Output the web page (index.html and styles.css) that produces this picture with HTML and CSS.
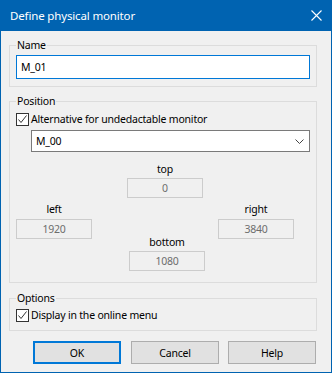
FILE: index.html
```html
<!DOCTYPE html>
<html lang="en">
<head>
    <meta charset="UTF-8">
    <title>Define physical monitor</title>
    <link rel="stylesheet" href="styles.css">
</head>
<body>

    <div class="window">
        <div class="titlebar">
            <span class="title">Define physical monitor</span>
            <svg class="close" width="11" height="11" viewBox="0 0 11 11">
                <path d="M0.5 0.5 L10.5 10.5 M10.5 0.5 L0.5 10.5" stroke="#fff" stroke-width="1.1" fill="none"/>
            </svg>
        </div>

        <div class="content">
            <fieldset class="group group-name">
                <legend>Name</legend>
                <div class="textbox">M_01</div>
            </fieldset>

            <fieldset class="group group-position">
                <legend>Position</legend>
                <label class="check-row">
                    <span class="checkbox">
                        <svg width="11" height="11" viewBox="0 0 11 11">
                            <path d="M1.5 5.5 L4 8.5 L9.5 1.5" stroke="#333" stroke-width="1" fill="none"/>
                        </svg>
                    </span>
                    Alternative for undedactable monitor
                </label>
                <div class="combo">
                    <span>M_00</span>
                    <svg width="9" height="5" viewBox="0 0 9 5">
                        <path d="M0.5 0.5 L4.5 4.5 L8.5 0.5" stroke="#444" stroke-width="1" fill="none"/>
                    </svg>
                </div>

                <div class="coords">
                    <div class="coord coord-top">
                        <div class="coord-label">top</div>
                        <div class="coord-field">0</div>
                    </div>
                    <div class="coord-row">
                        <div class="coord">
                            <div class="coord-label">left</div>
                            <div class="coord-field">1920</div>
                        </div>
                        <div class="coord coord-right">
                            <div class="coord-label">right</div>
                            <div class="coord-field">3840</div>
                        </div>
                    </div>
                    <div class="coord coord-bottom">
                        <div class="coord-label">bottom</div>
                        <div class="coord-field">1080</div>
                    </div>
                </div>
            </fieldset>

            <fieldset class="group group-options">
                <legend>Options</legend>
                <label class="check-row">
                    <span class="checkbox">
                        <svg width="11" height="11" viewBox="0 0 11 11">
                            <path d="M1.5 5.5 L4 8.5 L9.5 1.5" stroke="#333" stroke-width="1" fill="none"/>
                        </svg>
                    </span>
                    Display in the online menu
                </label>
            </fieldset>

            <div class="buttons">
                <button class="btn btn-default">OK</button>
                <button class="btn">Cancel</button>
                <button class="btn">Help</button>
            </div>
        </div>
    </div>

</body>
</html>
```

FILE: styles.css
```css
* {
    box-sizing: border-box;
}

body {
    margin: 0;
    font-family: 'Noto Sans', 'Open Sans', sans-serif;
    font-size: 10.5px;
    letter-spacing: -0.2px;
    color: #000;
}

.window {
    width: 332px;
    height: 373px;
    background: #f0f0f0;
    border: 1px solid #0063b1;
    border-top: none;
}

.titlebar {
    height: 31px;
    background: #0063b1;
    color: #fff;
    display: flex;
    align-items: center;
    justify-content: space-between;
    padding: 0 10px 0 9px;
    margin: 0 -1px;
    font-size: 11.5px;
    letter-spacing: -0.15px;
}

.title {
    padding-left: 1px;
}

.content {
    padding: 7px 14px 0 8px;
    line-height: 15px;
}

.group {
    margin: 0;
    padding: 0 6px 7px 6px;
    border: 1px solid #dcdcdc;
    min-width: 0;
}

.group legend {
    padding: 0 1px;
    line-height: 15px;
}

.textbox {
    margin-top: 2px;
    height: 24px;
    width: 294px;
    border: 1px solid #0078d7;
    background: #fff;
    padding: 0 4px;
    line-height: 22px;
}

.group-position {
    margin-top: 7px;
    padding-bottom: 11px;
}

.check-row {
    display: flex;
    align-items: center;
    margin-top: 3px;
    height: 15px;
}

.checkbox {
    width: 13px;
    height: 13px;
    border: 1px solid #333;
    background: #fff;
    display: flex;
    align-items: center;
    justify-content: center;
    margin-right: 2px;
}

.combo {
    margin: 3px 0 0 15px;
    height: 22px;
    width: 279px;
    border: 1px solid #7a7a7a;
    background: #fff;
    display: flex;
    align-items: center;
    justify-content: space-between;
    padding: 0 5px 0 4px;
}

.coords {
    padding-top: 10px;
}

.coord {
    width: 76px;
    text-align: center;
}

.coord-top {
    margin-left: 111px;
}

.coord-row {
    display: flex;
    justify-content: space-between;
    padding-right: 16px;
    margin-top: 4px;
}

.coord-bottom {
    margin-left: 113px;
    margin-top: -4px;
}

.coord-field {
    margin-top: 1px;
    height: 20px;
    border: 1px solid #cccccc;
    color: #6d6d6d;
    line-height: 18px;
}

.coord-row .coord-field {
    margin-top: 2px;
}

.group-options {
    margin-top: 8px;
    padding-bottom: 7px;
}

.group-options .check-row {
    margin-top: 2px;
}

.buttons {
    display: flex;
    justify-content: flex-end;
    gap: 9px;
    margin-top: 10px;
    padding-right: 1px;
}

.btn {
    width: 88px;
    height: 23px;
    background: #e1e1e1;
    border: 1px solid #adadad;
    font-family: inherit;
    font-size: 10.5px;
    letter-spacing: -0.2px;
    color: #000;
    padding: 0;
}

.btn-default {
    border: 2px solid #0078d7;
    margin-right: 1px;
}
```
